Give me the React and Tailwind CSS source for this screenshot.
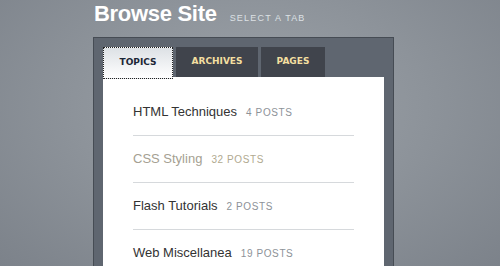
import React from 'react';

const topics = [
    { name: 'HTML Techniques', count: 4 },
    { name: 'CSS Styling', count: 32, hover: true },
    { name: 'Flash Tutorials', count: 2 },
    { name: 'Web Miscellanea', count: 19 },
];

const tabs = [
    { label: 'TOPICS', active: true, w: 'w-[70px]' },
    { label: 'ARCHIVES', w: 'w-[82px]' },
    { label: 'PAGES', w: 'w-[64px]' },
];

export default function App() {
    return (
        <div className="w-[500px] h-[266px] overflow-hidden bg-[radial-gradient(ellipse_at_50%_40%,#9da3a9_0%,#8d939a_50%,#7c828a_100%)] font-['Liberation_Sans',Arial,sans-serif]">
            {/* Heading */}
            <div className="flex items-baseline pl-[94px] pt-[1px] h-[37px]">
                <h1 className="text-[22px] leading-[26px] font-bold text-white tracking-[-0.3px]">Browse Site</h1>
                <span className="ml-[13px] text-[9px] tracking-[1.2px] text-[#dde1e5]">SELECT A TAB</span>
            </div>

            {/* Panel */}
            <div className="ml-[93px] w-[301px] h-[240px] border border-[#464c54] bg-[#5f6670] pt-[9px] px-[9px]">
                <div className="flex gap-[3px] h-[32px] items-start">
                    {tabs.map((t) =>
                        t.active ? (
                            <div
                                key={t.label}
                                className={`${t.w} h-[32px] flex items-center justify-center border border-dotted border-[#222] bg-gradient-to-b from-[#dde1e5] to-white text-[9px] font-bold text-[#1c2636] font-['DejaVu_Sans',Verdana,sans-serif] pb-[1px]`}
                            >
                                {t.label}
                            </div>
                        ) : (
                            <div
                                key={t.label}
                                className={`${t.w} h-[30px] flex items-center justify-center bg-[#40444c] text-[9px] font-bold text-[#f3dfa0] font-['DejaVu_Sans',Verdana,sans-serif]`}
                            >
                                {t.label}
                            </div>
                        )
                    )}
                </div>
                <div className="bg-white h-[200px] -mt-[2px] px-[30px] pt-[12px]">
                    <ul>
                        {topics.map((t) => (
                            <li
                                key={t.name}
                                className="flex items-baseline pt-[15px] pb-[14px] border-b border-[#d6d9dc] leading-[16px]"
                            >
                                <span className={`text-[13px] ${t.hover ? 'text-[#a59f92]' : 'text-[#333]'}`}>{t.name}</span>
                                <span className={`ml-[9px] text-[10px] tracking-[0.6px] ${t.hover ? 'text-[#b0a98f]' : 'text-[#8d9298]'}`}>
                                    {t.count} POSTS
                                </span>
                            </li>
                        ))}
                    </ul>
                </div>
            </div>
        </div>
    );
}
